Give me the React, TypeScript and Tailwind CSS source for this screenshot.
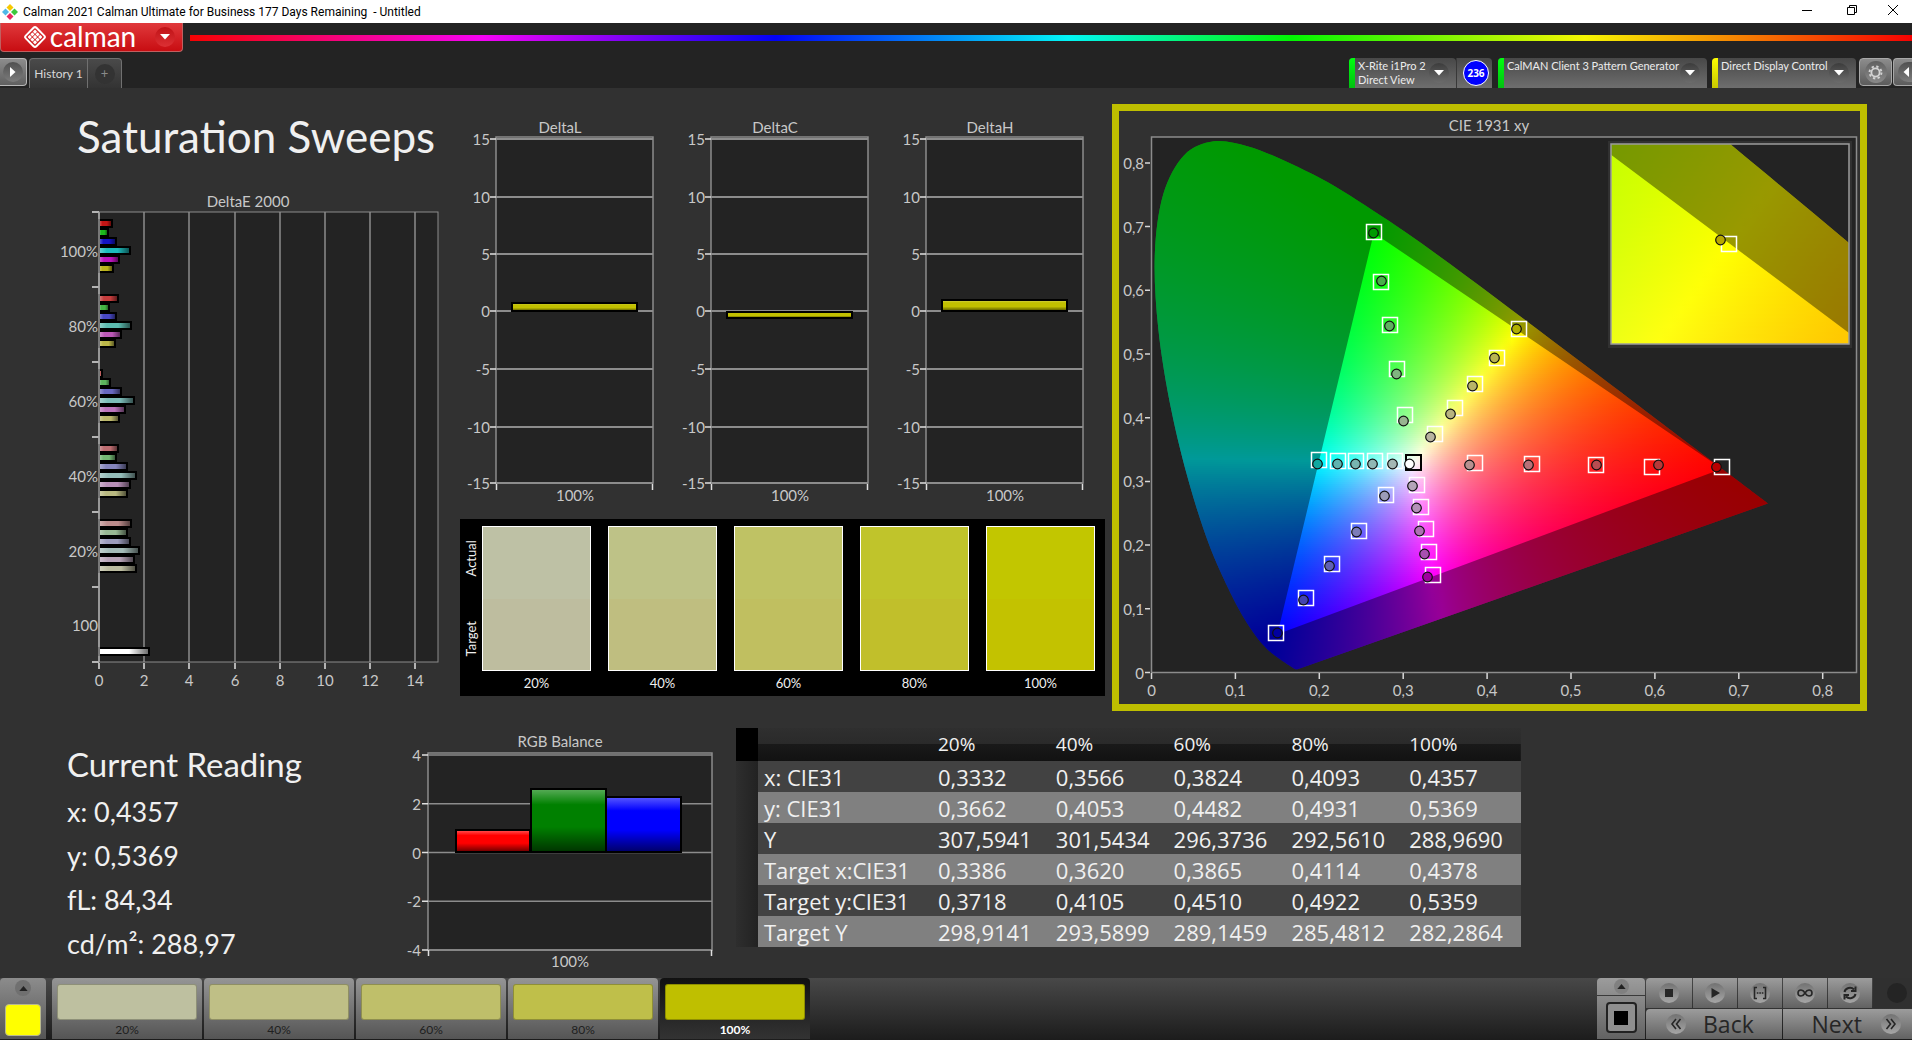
import type { ReactNode } from 'react';

const LABEL = 'fill-[#c8c8c8] text-[15px]';

/* ---------- shared chart pieces ---------- */

function Bar({ x, y, w, h, color, horizontal }: { x: number; y: number; w: number; h: number; color: string; horizontal?: boolean }) {
  return (
    <g>
      <rect x={x} y={y} width={w} height={h} fill={color} />
      <rect x={x} y={y} width={w} height={h} fill={horizontal ? 'url(#shade-h)' : 'url(#shade-v)'} />
      <rect x={x} y={y} width={w} height={h} fill="none" stroke="#000" strokeWidth={2} />
    </g>
  );
}

function ShadeDefs() {
  const stops = (
    <>
      <stop offset="0" stopColor="#fff" stopOpacity="0.35" />
      <stop offset="0.25" stopColor="#fff" stopOpacity="0" />
      <stop offset="0.6" stopColor="#000" stopOpacity="0" />
      <stop offset="1" stopColor="#000" stopOpacity="0.6" />
    </>
  );
  return (
    <svg width="0" height="0" className="absolute" aria-hidden="true">
      <defs>
        <linearGradient id="shade-h" x1="0" y1="0" x2="1" y2="0">{stops}</linearGradient>
        <linearGradient id="shade-v" x1="0" y1="0" x2="0" y2="1">{stops}</linearGradient>
      </defs>
    </svg>
  );
}

/* ---------- DeltaE 2000 ---------- */

const DELTA_E = [
  { label: '100%', widths: [13, 9, 17, 31, 20, 14], colors: ['#c41414', '#1cb81c', '#1414c4', '#1cbcbc', '#bc14bc', '#bcb41c'] },
  { label: '80%', widths: [19, 10, 17, 32, 22, 16], colors: ['#c43c3c', '#44b444', '#4848c4', '#5cbcb0', '#bc58b8', '#bcb848'] },
  { label: '60%', widths: [3, 11, 22, 35, 26, 20], colors: ['#c06060', '#5cb45c', '#6868c0', '#7cbcb8', '#bc74bc', '#bcb86c'] },
  { label: '40%', widths: [19, 17, 28, 37, 31, 28], colors: ['#bc6c70', '#74b874', '#8484bc', '#94bcb8', '#b890b8', '#b8b880'] },
  { label: '20%', widths: [32, 28, 31, 40, 35, 37], colors: ['#bc8c8c', '#98b894', '#9c9cbc', '#a4bcb8', '#b8a4b8', '#bcbca0'] },
];

function DeltaEChart() {
  return (
    <svg viewBox="0 0 460 506" className="block h-auto w-full" role="img" aria-label="DeltaE 2000">
      <text x="248" y="23" textAnchor="middle" className={LABEL}>DeltaE 2000</text>
      <rect x="99" y="28" width="339" height="450" fill="#232323" stroke="#8c8c8c" strokeWidth="1" />
      {[0, 2, 4, 6, 8, 10, 12, 14].map((v) => {
        const x = 99 + Math.round(v * 22.6);
        return (
          <g key={v}>
            <path d={`M${x} 28V478`} stroke="#8c8c8c" strokeWidth="1.5" />
            <path d={`M${x} 479V485`} stroke="#e0e0e0" strokeWidth="1.5" />
            <text x={x} y="502" textAnchor="middle" className={LABEL}>{v}</text>
          </g>
        );
      })}
      {[0, 1, 2, 3, 4, 5, 6].map((i) => (
        <path key={i} d={`M92 ${28 + i * 75}H99`} stroke="#e0e0e0" strokeWidth="1.5" />
      ))}
      {DELTA_E.map((row, i) => (
        <g key={row.label}>
          <text x="98" y={73 + i * 75} textAnchor="end" className={LABEL}>{row.label}</text>
          {row.widths.map((w, j) => (
            <Bar key={j} horizontal x={99} y={36 + i * 75 + j * 9} w={w} h={7} color={row.colors[j]} />
          ))}
        </g>
      ))}
      <text x="98" y="447" textAnchor="end" className={LABEL}>100</text>
      <Bar horizontal x={99} y={464} w={50} h={7} color="#ffffff" />
      <path d="M99 28V478" stroke="#a0a0a0" strokeWidth="1.5" />
    </svg>
  );
}

/* ---------- DeltaL / DeltaC / DeltaH ---------- */

const DELTA_TICKS = [
  { v: 15, y: 27 }, { v: 10, y: 85 }, { v: 5, y: 142 }, { v: 0, y: 199 }, { v: -5, y: 257 }, { v: -10, y: 315 }, { v: -15, y: 371 },
];

function DeltaChart({ title, top, height }: { title: string; top: number; height: number }) {
  return (
    <svg viewBox="0 0 215 400" className="block h-auto w-full" role="img" aria-label={title}>
      <text x="100" y="21" textAnchor="middle" className={LABEL}>{title}</text>
      <rect x="36" y="25" width="157" height="346" fill="#232323" stroke="#8c8c8c" strokeWidth="1.5" />
      {DELTA_TICKS.map(({ v, y }) => (
        <g key={v}>
          <path d={`M36 ${y}H193`} stroke="#8c8c8c" strokeWidth="2" />
          <path d={`M30 ${y}H36`} stroke="#e0e0e0" strokeWidth="1.5" />
          <text x="30" y={y + 6} textAnchor="end" className={LABEL}>{v}</text>
        </g>
      ))}
      <path d="M36.5 372V378M192.5 372V378" stroke="#e0e0e0" strokeWidth="1.5" />
      <text x="115" y="389" textAnchor="middle" className={LABEL}>100%</text>
      <Bar x={52} y={top} w={125} h={height} color="#c2c000" />
    </svg>
  );
}

/* ---------- swatch comparison ---------- */

const SWATCHES = [
  { label: '20%', actual: 'bg-[#bec1a5]', target: 'bg-[#bebd9f]' },
  { label: '40%', actual: 'bg-[#bec287]', target: 'bg-[#bfbe80]' },
  { label: '60%', actual: 'bg-[#bfc264]', target: 'bg-[#c0bf60]' },
  { label: '80%', actual: 'bg-[#c0c42b]', target: 'bg-[#c1bf2b]' },
  { label: '100%', actual: 'bg-[#c2c600]', target: 'bg-[#c3c200]' },
];

function SwatchPanel() {
  return (
    <section className="mt-[7px] flex h-[177px] bg-black pt-[7px] pr-[10px] text-[13px] text-[#f0f0f0]">
      <div className="flex h-[145px] w-[22px] shrink-0 flex-col">
        <span className="flex flex-1 rotate-180 items-center justify-center pt-2 leading-[20px] [writing-mode:vertical-rl]">Actual</span>
        <span className="flex flex-1 rotate-180 items-center justify-center pb-2 leading-[20px] [writing-mode:vertical-rl]">Target</span>
      </div>
      <div className="grid flex-1 grid-cols-5 gap-[17px]">
        {SWATCHES.map((s) => (
          <div key={s.label} className="text-center">
            <div className="flex h-[145px] flex-col border border-white">
              <div className={`flex-1 ${s.actual}`} />
              <div className={`flex-1 ${s.target}`} />
            </div>
            <div className="mt-[2px] leading-5">{s.label}</div>
          </div>
        ))}
      </div>
    </section>
  );
}

/* ---------- CIE 1931 ---------- */

const LOCUS: [number, number][] = [
  [0.1741, 0.005], [0.1714, 0.0051], [0.1689, 0.0069], [0.1644, 0.0109], [0.1566, 0.0177], [0.144, 0.0297],
  [0.1355, 0.0399], [0.1241, 0.0578], [0.1096, 0.0868], [0.0913, 0.1327], [0.0687, 0.2007], [0.0454, 0.295],
  [0.0235, 0.4127], [0.0082, 0.5384], [0.0039, 0.6548], [0.0139, 0.7502], [0.0389, 0.812], [0.0743, 0.8338],
  [0.1142, 0.8262], [0.1547, 0.8059], [0.1929, 0.7816], [0.2296, 0.7543], [0.3016, 0.6923], [0.3731, 0.6245],
  [0.4441, 0.5547], [0.5125, 0.4866], [0.5752, 0.4242], [0.627, 0.3725], [0.6658, 0.334], [0.6915, 0.3083],
  [0.719, 0.2809], [0.7347, 0.2653],
];
const GAMUT: [number, number][] = [[0.265, 0.69], [0.68, 0.32], [0.15, 0.06]];

type Scale = { x0: number; y0: number; sx: number; sy: number };

function colorAt(x: number, y: number) {
  const z = 1 - x - y;
  const rgb = [
    2.4935 * x - 0.9314 * y - 0.4027 * z,
    -0.8295 * x + 1.7627 * y + 0.0236 * z,
    0.0358 * x - 0.0762 * y + 0.9569 * z,
  ].map((v) => Math.max(0, v));
  const max = Math.max(...rgb) || 1;
  return `rgb(${rgb.map((v) => Math.round((v / max) * 255)).join(',')})`;
}

function ChromaField({ id, scale, left, top, right, bottom }: { id: string; scale: Scale; left: number; top: number; right: number; bottom: number }) {
  const px = ([x, y]: [number, number]) => [scale.x0 + x * scale.sx, scale.y0 - y * scale.sy];
  const pts = LOCUS.map(px);
  let locus = `M${pts[0][0].toFixed(2)} ${pts[0][1].toFixed(2)}`;
  for (let i = 0; i < pts.length - 1; i++) {
    const p0 = pts[Math.max(0, i - 1)];
    const p1 = pts[i];
    const p2 = pts[i + 1];
    const p3 = pts[Math.min(pts.length - 1, i + 2)];
    const c = [p1[0] + (p2[0] - p0[0]) / 6, p1[1] + (p2[1] - p0[1]) / 6, p2[0] - (p3[0] - p1[0]) / 6, p2[1] - (p3[1] - p1[1]) / 6, p2[0], p2[1]];
    locus += `C${c.map((v) => v.toFixed(2)).join(' ')}`;
  }
  locus += 'Z';
  const tri = `M${GAMUT.map((g) => px(g).map((v) => v.toFixed(2)).join(' ')).join('L')}Z`;
  const rows: number[] = [];
  for (let y = top; y < bottom; y += 2) rows.push(y);
  const cols: number[] = [];
  for (let x = left; x <= right; x += 10) cols.push(x);
  return (
    <g>
      <defs>
        <clipPath id={`${id}-locus`}><path d={locus} /></clipPath>
        <clipPath id={`${id}-frame`}><rect x={left} y={top} width={right - left} height={bottom - top} /></clipPath>
        {rows.map((y) => (
          <linearGradient key={y} id={`${id}-${y}`} gradientUnits="userSpaceOnUse" x1={left} x2={right} y1="0" y2="0">
            {cols.map((x) => (
              <stop key={x} offset={(x - left) / (right - left)} stopColor={colorAt((x - scale.x0) / scale.sx, (scale.y0 - y - 1) / scale.sy)} />
            ))}
          </linearGradient>
        ))}
      </defs>
      <g clipPath={`url(#${id}-frame)`}>
        <g clipPath={`url(#${id}-locus)`}>
          {rows.map((y) => (
            <rect key={y} x={left} y={y} width={right - left} height="2" fill={`url(#${id}-${y})`} shapeRendering="crispEdges" />
          ))}
        </g>
        <path d={`${locus}${tri}`} fill="#000" fillOpacity="0.4" fillRule="evenodd" />
      </g>
    </g>
  );
}

const TARGETS: [number, number][] = [
  [1374, 232], [1381, 282], [1390, 325], [1397, 369], [1405, 415],
  [1519, 329], [1497, 358], [1475, 384], [1455, 408], [1435, 434],
  [1319, 460], [1338, 461], [1356, 461], [1375, 461], [1395, 461],
  [1475, 463], [1532, 464], [1596, 465], [1652, 467], [1722, 467],
  [1417, 485], [1421, 507], [1426, 529], [1429, 552], [1433, 575],
  [1386, 495], [1359, 531], [1332, 564], [1306, 598], [1276, 633],
];
const READINGS: [number, number, string][] = [
  [1373, 233, '#009a00'], [1381, 281, '#48b048'], [1389, 326, '#60b060'], [1396, 374, '#80b480'], [1403, 421, '#98b490'],
  [1516, 329, '#b0b000'], [1494, 358, '#b8b450'], [1472, 386, '#b8b468'], [1450, 414, '#b8b480'], [1430, 437, '#b8b4a0'],
  [1317, 464, '#10a8a0'], [1337, 464, '#60b4b0'], [1355, 464, '#78b4b0'], [1372, 464, '#90b8b4'], [1392, 464, '#a4b8b4'],
  [1469, 465, '#b89090'], [1528, 465, '#b87078'], [1596, 465, '#b84c50'], [1658, 465, '#b83838'], [1716, 467, '#b80000'],
  [1412, 486, '#b4a4b8'], [1416, 508, '#b490b8'], [1419, 531, '#b070b4'], [1424, 554, '#a850b0'], [1427, 577, '#a000a0'],
  [1384, 496, '#9c9cb8'], [1356, 532, '#7c7cb8'], [1329, 566, '#6060b4'], [1303, 600, '#4444b0'], [1277, 633, '#0000a0'],
  [1409, 464, '#ffffff'],
];

function CieChart() {
  return (
    <svg viewBox="1119 111 741 593" className="block h-auto w-full" role="img" aria-label="CIE 1931 xy">
      <text x="1489" y="131" textAnchor="middle" className={LABEL}>CIE 1931 xy</text>
      <rect x="1151.5" y="137" width="705" height="535.5" fill="#232323" stroke="#8c8c8c" strokeWidth="1.5" />
      {[0, 1, 2, 3, 4, 5, 6, 7, 8].map((n) => {
        const x = 1151.5 + n * 83.9;
        const y = 672.5 - n * 63.7;
        const text = n === 0 ? '0' : `0,${n}`;
        return (
          <g key={n}>
            <path d={`M${x} 673V679M1145 ${y}H1150`} stroke="#d8d8d8" strokeWidth="1.5" />
            <text x={x} y="696" textAnchor="middle" className={LABEL}>{text}</text>
            <text x="1144" y={y + 6} textAnchor="end" className={LABEL}>{text}</text>
          </g>
        );
      })}
      <ChromaField id="main" scale={{ x0: 1151.5, y0: 672.5, sx: 839, sy: 637 }} left={1152} top={138} right={1772} bottom={672} />
      <g fill="none" stroke="#fff" strokeWidth="1.5">
        {TARGETS.map(([x, y]) => <rect key={`${x}-${y}`} x={x - 7.5} y={y - 7.5} width="15" height="15" />)}
        <rect x="1406" y="455" width="15" height="15" stroke="#000" strokeWidth="2" />
      </g>
      {READINGS.map(([x, y, fill]) => <circle key={`${x}-${y}`} cx={x + 0.5} cy={y} r="4.8" fill={fill} stroke="#101010" strokeWidth="1.2" />)}
      <rect x="1608" y="141" width="244" height="207" fill="#313131" />
      <rect x="1611" y="144" width="238" height="200" fill="#232323" />
      <ChromaField id="inset" scale={{ x0: 1730 - 0.4378 * 4760, y0: 244 + 0.5359 * 4000, sx: 4760, sy: 4000 }} left={1611} top={144} right={1849} bottom={344} />
      <rect x="1611" y="144" width="238" height="200" fill="none" stroke="#9c9c9c" strokeWidth="1.5" />
      <rect x="1721.5" y="236.5" width="15" height="15" fill="none" stroke="#fff" strokeWidth="1.5" />
      <circle cx="1720.5" cy="240" r="4.8" fill="#b8a800" stroke="#101010" strokeWidth="1.2" />
    </svg>
  );
}

/* ---------- RGB balance ---------- */

function RgbBalance() {
  return (
    <svg viewBox="0 0 336 266" className="block h-auto w-full" role="img" aria-label="RGB Balance">
      <text x="160" y="36" textAnchor="middle" className={LABEL}>RGB Balance</text>
      <rect x="28" y="42" width="284" height="197" fill="#232323" stroke="#8c8c8c" strokeWidth="1.5" />
      {[4, 2, 0, -2, -4].map((v, i) => {
        const y = 44 + i * 48.75;
        return (
          <g key={v}>
            <path d={`M28 ${y}H312`} stroke="#8c8c8c" strokeWidth="1.5" />
            <path d={`M22 ${y}H28`} stroke="#e0e0e0" strokeWidth="1.5" />
            <text x="21" y={y + 6} textAnchor="end" className={LABEL}>{v}</text>
          </g>
        );
      })}
      <path d="M28.5 239V245M311.5 239V245" stroke="#e0e0e0" strokeWidth="1.5" />
      <text x="170" y="256" textAnchor="middle" className={LABEL}>100%</text>
      <Bar x={56} y={119} w={74} h={22} color="#ff0000" />
      <Bar x={131} y={78} w={75} h={63} color="#008000" />
      <Bar x={206} y={86} w={75} h={55} color="#0000ff" />
    </svg>
  );
}

/* ---------- readings table ---------- */

const TABLE: [string, string[]][] = [
  ['x: CIE31', ['0,3332', '0,3566', '0,3824', '0,4093', '0,4357']],
  ['y: CIE31', ['0,3662', '0,4053', '0,4482', '0,4931', '0,5369']],
  ['Y', ['307,5941', '301,5434', '296,3736', '292,5610', '288,9690']],
  ['Target x:CIE31', ['0,3386', '0,3620', '0,3865', '0,4114', '0,4378']],
  ['Target y:CIE31', ['0,3718', '0,4105', '0,4510', '0,4922', '0,5359']],
  ['Target Y', ['298,9141', '293,5899', '289,1459', '285,4812', '282,2864']],
];

function ReadingsTable() {
  return (
    <table className="mt-[17px] w-[785px] table-fixed border-collapse self-start text-left font-['Open_Sans',sans-serif] text-[22px] text-[#f0f0f0]">
      <colgroup>
        <col className="w-[22px]" />
        <col className="w-[174px]" />
      </colgroup>
      <thead>
        <tr className="h-[33px] bg-[linear-gradient(#2f2f2f_0%,#2a2a2a_49%,#191919_50%,#121212_100%)] leading-[31px]">
          <td className="bg-black p-0" />
          <td className="p-0" />
          {['20%', '40%', '60%', '80%', '100%'].map((h) => <th key={h} scope="col" className="p-0 pl-[6px] text-[19px] font-normal">{h}</th>)}
        </tr>
      </thead>
      <tbody>
        {TABLE.map(([name, values]) => (
          <tr key={name} className="h-[31px] bg-[#424242] leading-[30px] even:bg-[#808080]">
            <td className="bg-[linear-gradient(90deg,#2e2e2e,#222)] p-0" />
            <th scope="row" className="p-0 pl-[6px] font-normal whitespace-nowrap">{name}</th>
            {values.map((v) => <td key={v} className="p-0 pl-[6px]">{v}</td>)}
          </tr>
        ))}
      </tbody>
    </table>
  );
}

/* ---------- header ---------- */

function ArrowDot() {
  return (
    <span className="flex size-5 shrink-0 items-center justify-center rounded-full bg-[linear-gradient(#3c3c3c,#6c6c6c)]">
      <svg viewBox="0 0 10 6" className="h-[6px] w-[10px]"><path d="M0 0H10L5 5.5Z" fill="#fff" /></svg>
    </span>
  );
}

function Device({ strip, width, children }: { strip: string; width: string; children: ReactNode }) {
  return (
    <button type="button" aria-haspopup="listbox" className={`flex h-[30px] items-center overflow-hidden rounded-t bg-[linear-gradient(#484848,#6e6e6e)] pr-[7px] text-left text-[11px] leading-[14px] text-[#ececec] ${width}`}>
      <span className={`mr-[3px] h-full w-[6px] shrink-0 ${strip}`} />
      <span className="h-full flex-1 whitespace-nowrap pt-px">{children}</span>
      <ArrowDot />
    </button>
  );
}

function AppHeader() {
  return (
    <header className="bg-[#232323]">
      <div className="flex h-[35px]">
        <button type="button" aria-label="Calman menu" className="flex h-[29px] w-[183px] items-center rounded-b border border-t-0 border-[#c06060] bg-[linear-gradient(#e0393c,#c80d12)] pl-[22px]">
          <svg viewBox="0 0 24 24" className="size-6">
            <g transform="rotate(45 12 12)">
              <rect x="4.5" y="4.5" width="15" height="15" rx="2" fill="none" stroke="#fff" strokeWidth="2" />
              {[6.8, 10.5, 14.2].map((x) => [6.8, 10.5, 14.2].map((y) => <rect key={`${x}-${y}`} x={x} y={y} width="3" height="3" rx="0.6" fill="#fff" />))}
            </g>
          </svg>
          <span className="ml-[2px] w-[88px] pb-[2px] text-[28px] leading-[26px] text-white">calman</span>
          <span className="ml-[18px] flex size-5 items-center justify-center rounded-full bg-[linear-gradient(#c01216,#dc3034)]">
            <svg viewBox="0 0 10 6" className="h-[6px] w-[10px]"><path d="M0 0H10L5 5.5Z" fill="#fff" /></svg>
          </span>
        </button>
        <div className="mt-3 ml-[7px] h-[6px] flex-1 bg-[linear-gradient(90deg,#f00,#f0f_17%,#00f_34%,#0ff_51%,#0f0_64%,#ff0_81%,#f00)] opacity-95" />
      </div>
      <div className="flex h-[30px]">
        <button type="button" aria-label="Expand panel" className="flex h-7 w-[27px] items-center justify-center rounded-r border border-l-0 border-[#b8b8b8] bg-[linear-gradient(#8c8c8c,#606060)]">
          <span className="flex size-5 items-center justify-center rounded-full bg-[linear-gradient(#505050,#7c7c7c)]">
            <svg viewBox="0 0 6 10" className="h-[10px] w-[6px]"><path d="M0 0V10L5.5 5Z" fill="#fff" /></svg>
          </span>
        </button>
        <div className="ml-[2px] flex rounded-t border border-b-0 border-[#707070] bg-[linear-gradient(#4a4a4a,#333)]">
          <button type="button" className="w-[58px] border-r border-[#707070] text-[12px] text-[#d8d8d8]">History 1</button>
          <button type="button" aria-label="Add history" className="flex w-[33px] items-center justify-center">
            <span className="flex size-5 items-center justify-center rounded-full bg-[#333] text-[13px] leading-none text-[#8a8a8a]">+</span>
          </button>
        </div>
        <div className="ml-auto flex">
          <Device strip="bg-[linear-gradient(#00ff10,#00c010)]" width="w-[107px]">X-Rite i1Pro 2<br />Direct View</Device>
          <div className="flex w-[36px] items-center justify-center rounded-tr border-l border-[#383838] bg-[linear-gradient(#484848,#6e6e6e)] pl-[3px]">
            <span className="flex size-[26px] items-center justify-center rounded-full border border-white bg-[#0000ff] font-['Open_Sans',sans-serif] text-[10px] font-bold text-white">236</span>
          </div>
          <span className="w-[6px]" />
          <Device strip="bg-[linear-gradient(#00ff10,#00c010)]" width="w-[209px]">CalMAN Client 3 Pattern Generator</Device>
          <span className="w-[5px]" />
          <Device strip="bg-[linear-gradient(#ffff00,#c8c800)]" width="w-[144px]">Direct Display Control</Device>
          <button type="button" aria-label="Settings" className="ml-[3px] flex h-7 w-[33px] items-center justify-center rounded border border-[#a8a8a8] bg-[linear-gradient(#8c8c8c,#5c5c5c)]">
            <span className="flex size-[22px] items-center justify-center rounded-full bg-[linear-gradient(#606060,#8a8a8a)]">
              <svg viewBox="0 0 16 16" className="size-[15px]" fill="none" stroke="#d4d4d4">
                <circle cx="8" cy="8" r="4.4" strokeWidth="2" />
                <circle cx="8" cy="8" r="6.4" strokeWidth="2" strokeDasharray="2.5 2.53" />
              </svg>
            </span>
          </button>
          <button type="button" aria-label="Collapse panel" className="ml-px flex h-7 w-[19px] items-center justify-end rounded-l border border-r-0 border-[#a8a8a8] bg-[linear-gradient(#8c8c8c,#5c5c5c)]">
            <span className="flex h-5 w-[14px] items-center justify-end rounded-l-full bg-[linear-gradient(#505050,#7c7c7c)] pr-[3px]">
              <svg viewBox="0 0 6 10" className="h-[10px] w-[6px]"><path d="M6 0V10L0.5 5Z" fill="#fff" /></svg>
            </span>
          </button>
        </div>
      </div>
    </header>
  );
}

function TitleBar() {
  return (
    <div className="flex h-[23px] items-center bg-white pl-[2px] font-['Roboto',sans-serif] text-[12px] text-black">
      <svg viewBox="0 0 16 16" className="size-4">
        <path d="M8 0L11.5 3.5 8 7 4.5 3.5Z" fill="#f7c800" />
        <path d="M12.5 4.5L16 8 12.5 11.5 9 8Z" fill="#3cc83c" />
        <path d="M8 9L11.5 12.5 8 16 4.5 12.5Z" fill="#e82860" />
        <path d="M3.5 4.5L7 8 3.5 11.5 0 8Z" fill="#50b8e8" />
      </svg>
      <span className="ml-[5px] whitespace-pre">Calman 2021 Calman Ultimate for Business 177 Days Remaining  - Untitled</span>
      <div className="ml-auto flex pb-[3px]">
        <button type="button" aria-label="Minimize" className="flex w-[45px] justify-center">
          <svg viewBox="0 0 10 10" className="size-[10px]" stroke="#000" fill="none"><path d="M0 5.5H10" /></svg>
        </button>
        <button type="button" aria-label="Restore" className="flex w-[45px] justify-center">
          <svg viewBox="0 0 10 10" className="size-[10px]" stroke="#000" fill="none"><path d="M0.5 2.5H7.5V9.5H0.5ZM2.5 2.5V0.5H9.5V7.5H7.5" /></svg>
        </button>
        <button type="button" aria-label="Close" className="flex w-[38px] justify-center">
          <svg viewBox="0 0 10 10" className="size-[10px]" stroke="#000" fill="none"><path d="M0 0L10 10M10 0L0 10" /></svg>
        </button>
      </div>
    </div>
  );
}

/* ---------- footer ---------- */

const STEPS = [
  { label: '20%', color: 'bg-[#bec0a0]' },
  { label: '40%', color: 'bg-[#bfbf86]' },
  { label: '60%', color: 'bg-[#bfbf6a]' },
  { label: '80%', color: 'bg-[#bfbf4a]' },
  { label: '100%', color: 'bg-[#bfbf00]' },
];

const METAL = 'bg-[linear-gradient(#9c9c9c,#626262)]';

function IconDot({ children }: { children?: ReactNode }) {
  return (
    <span className="flex size-5 items-center justify-center rounded-full bg-[linear-gradient(#727272,#a6a6a6)]">
      <svg viewBox="0 0 16 16" className="size-4" fill="none" stroke="#262626" strokeWidth="1.6">{children}</svg>
    </span>
  );
}

const TRANSPORT: { name: string; icon: ReactNode }[] = [
  { name: 'Stop', icon: <rect x="4" y="4" width="8" height="8" fill="#262626" stroke="none" /> },
  { name: 'Play', icon: <path d="M4.5 3L13 8 4.5 13Z" fill="#262626" stroke="none" /> },
  { name: 'Read series', icon: <path d="M5 2.5H2.5V13.5H5M11 2.5H13.5V13.5H11M4.8 8H6.4M7.3 8H8.9M9.8 8H11.4" /> },
  { name: 'Continuous', icon: <path d="M8 8C6.5 5.5 5.2 5 4 5A3 3 0 0 0 4 11C5.2 11 6.5 10.5 8 8C9.5 5.5 10.8 5 12 5A3 3 0 0 1 12 11C10.8 11 9.5 10.5 8 8Z" /> },
  { name: 'Refresh', icon: <path d="M2.5 7A5.5 5 0 0 1 12 4.5M13.5 1.5V6H9M13.5 9A5.5 5 0 0 1 4 11.5M2.5 14.5V10H7" strokeWidth="2" /> },
];

function Footer() {
  return (
    <footer className="flex h-[62px] bg-[linear-gradient(#484848,#1c1c1c)] pb-px">
      <button type="button" aria-label="Current color" className="flex w-[46px] flex-col items-center rounded-t bg-[linear-gradient(#8c8c8c,#555)]">
        <span className="mt-[2px] flex size-4 items-center justify-center rounded-full bg-[#707070]">
          <svg viewBox="0 0 10 6" className="h-[5px] w-[9px]"><path d="M0 6H10L5 0Z" fill="#222" /></svg>
        </span>
        <span className="mt-[8px] h-8 w-9 rounded border border-[#b8b890] bg-[#ffff00]" />
      </button>
      <div className="ml-[6px] flex gap-[2px]">
        {STEPS.map((s, i) => (
          <button
            key={s.label}
            type="button"
            aria-pressed={i === 4}
            className={`flex w-[150px] flex-col items-center rounded-t pt-[6px] text-[12px] ${i === 4 ? 'bg-[linear-gradient(#111,#333)] font-bold text-white' : 'bg-[linear-gradient(#959595,#555)] text-[#202020]'}`}
          >
            <span className={`h-[36px] w-[140px] rounded-[3px] border border-black/25 ${s.color}`} />
            <span className="mt-[2px] leading-4">{s.label}</span>
          </button>
        ))}
      </div>
      <div className={`ml-auto flex w-[48px] flex-col items-center rounded-t ${METAL}`}>
        <button type="button" aria-label="Expand" className="flex h-[18px] w-full items-center justify-center border-b border-[#3a3a3a]">
          <span className="flex size-[15px] items-center justify-center rounded-full bg-[#808080]">
            <svg viewBox="0 0 10 6" className="h-[5px] w-[9px]"><path d="M0 6H10L5 0Z" fill="#222" /></svg>
          </span>
        </button>
        <button type="button" aria-label="Stop reading" className="mt-[6px] flex size-[31px] items-center justify-center rounded border-2 border-[#222] bg-[#8f8f8f]">
          <span className="size-[14px] bg-black" />
        </button>
      </div>
      <div className="ml-px flex w-[266px] flex-col gap-px">
        <div className="flex flex-1 gap-px">
          {TRANSPORT.map((t) => (
            <button key={t.name} type="button" aria-label={t.name} className={`flex w-[44px] items-center justify-center first:w-[46px] first:rounded-tl ${METAL}`}>
              <IconDot>{t.icon}</IconDot>
            </button>
          ))}
          <span className="flex flex-1 items-center justify-center bg-[#303030] pl-2"><span className="size-5 rounded-full bg-[#242424]" /></span>
        </div>
        <div className="flex flex-1 gap-px font-['Open_Sans',sans-serif] text-[23px] leading-[28px] text-[#262626]">
          <button type="button" className={`flex w-[136px] items-center gap-[17px] rounded-tl pl-5 ${METAL}`}>
            <IconDot><path d="M8 3L4 8 8 13M12.5 3L8.5 8 12.5 13" /></IconDot>
            Back
          </button>
          <button type="button" className={`flex flex-1 items-center justify-end gap-[19px] pr-[11px] ${METAL}`}>
            Next
            <IconDot><path d="M8 3L12 8 8 13M3.5 3L7.5 8 3.5 13" /></IconDot>
          </button>
        </div>
      </div>
    </footer>
  );
}

export default function App() {
  return (
    <div className="flex min-h-screen flex-col overflow-x-hidden bg-[#313131] font-['Lato',sans-serif]">
      <ShadeDefs />
      <TitleBar />
      <AppHeader />
      <main className="flex-1">
        <div className="grid grid-cols-[460fr_645fr_807fr]">
          <div>
            <h1 className="h-24 pt-[24px] pl-[77px] text-[44px] leading-[48px] whitespace-nowrap text-[#f0f0f0]">Saturation Sweeps</h1>
            <DeltaEChart />
          </div>
          <div className="pt-6">
            <div className="grid grid-cols-3">
              <DeltaChart title="DeltaL" top={191} height={8} />
              <DeltaChart title="DeltaC" top={200} height={6} />
              <DeltaChart title="DeltaH" top={188} height={11} />
            </div>
            <SwatchPanel />
          </div>
          <div className="pt-4 pr-[45px] pl-[7px]">
            <div className="border-[7px] border-[#bebe00]"><CieChart /></div>
          </div>
        </div>
        <div className="grid grid-cols-[400fr_336fr_1176fr]">
          <section className="pt-[33px] pl-[67px] text-[#f0f0f0]">
            <h2 className="text-[33px] leading-[40px]">Current Reading</h2>
            <div className="pt-[6px] text-[27px] leading-[44px]">
              <p>x: 0,4357</p>
              <p>y: 0,5369</p>
              <p>fL: 84,34</p>
              <p>cd/m²: 288,97</p>
            </div>
          </section>
          <RgbBalance />
          <ReadingsTable />
        </div>
      </main>
      <Footer />
    </div>
  );
}
